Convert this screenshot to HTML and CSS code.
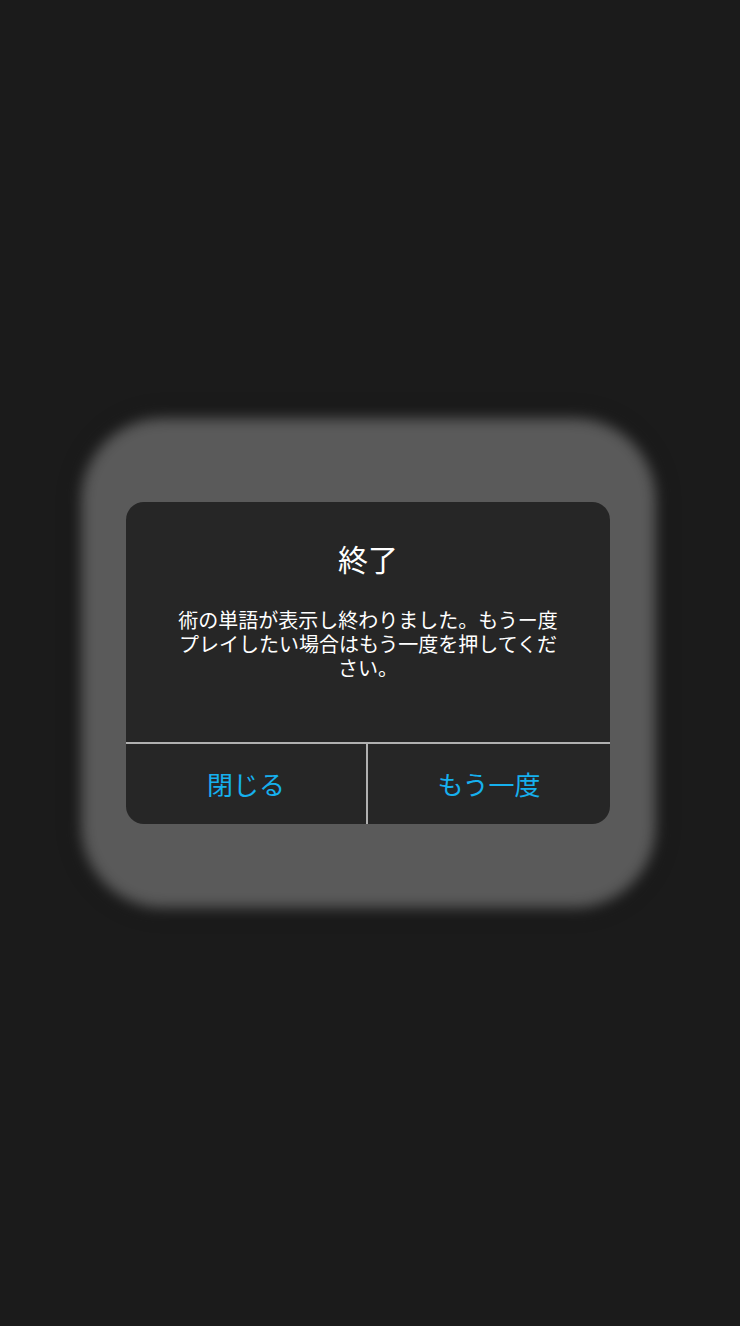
FILE: index.html
```html
<!DOCTYPE html>
<html lang="ja">
<head>
<meta charset="utf-8">
<title>終了</title>
<link rel="stylesheet" href="styles.css">
</head>
<body>
<div class="screen">
  <div class="stage">
    <div class="backdrop"></div>
    <div class="dialog">
      <div class="title">終了</div>
      <div class="message">術の単語が表示し終わりました。もうー度プレイしたい場合はもう一度を押してください。</div>
      <div class="actions">
        <div class="btn">閉じる</div>
        <div class="sep"></div>
        <div class="btn">もう一度</div>
      </div>
    </div>
  </div>
</div>
</body>
</html>
```

FILE: styles.css
```css
html, body {
  margin: 0;
  padding: 0;
  background: #1b1b1b;
}
body {
  font-family: "Noto Sans CJK JP", "Noto Sans", sans-serif;
}
.screen {
  height: 1326px;
  display: flex;
  align-items: center;
  justify-content: center;
}
.stage {
  display: grid;
  margin-right: 4px;
}
.backdrop {
  grid-area: 1 / 1;
  width: 575px;
  height: 490px;
  background: #5a5a5a;
  border-radius: 82px;
  filter: blur(7px);
  box-shadow: 0 0 14px 4px rgba(0, 0, 0, 0.3);
}
.dialog {
  grid-area: 1 / 1;
  z-index: 1;
  place-self: center;
  width: 484px;
  height: 322px;
  background: #262626;
  border-radius: 18px;
  overflow: hidden;
  display: flex;
  flex-direction: column;
  color: #ffffff;
  text-align: center;
}
.title {
  padding-top: 38px;
  font-size: 30px;
  line-height: 36px;
}
.message {
  margin-top: 32px;
  padding: 0 44px;
  font-size: 20px;
  line-height: 24px;
}
.actions {
  margin-top: auto;
  height: 80px;
  border-top: 2px solid #b0b0b0;
  display: grid;
  grid-template-columns: 240px 2px 1fr;
}
.sep {
  background: #b0b0b0;
}
.btn {
  display: flex;
  align-items: center;
  justify-content: center;
  padding-bottom: 2px;
  font-size: 26px;
  color: #16b0ee;
}
```
